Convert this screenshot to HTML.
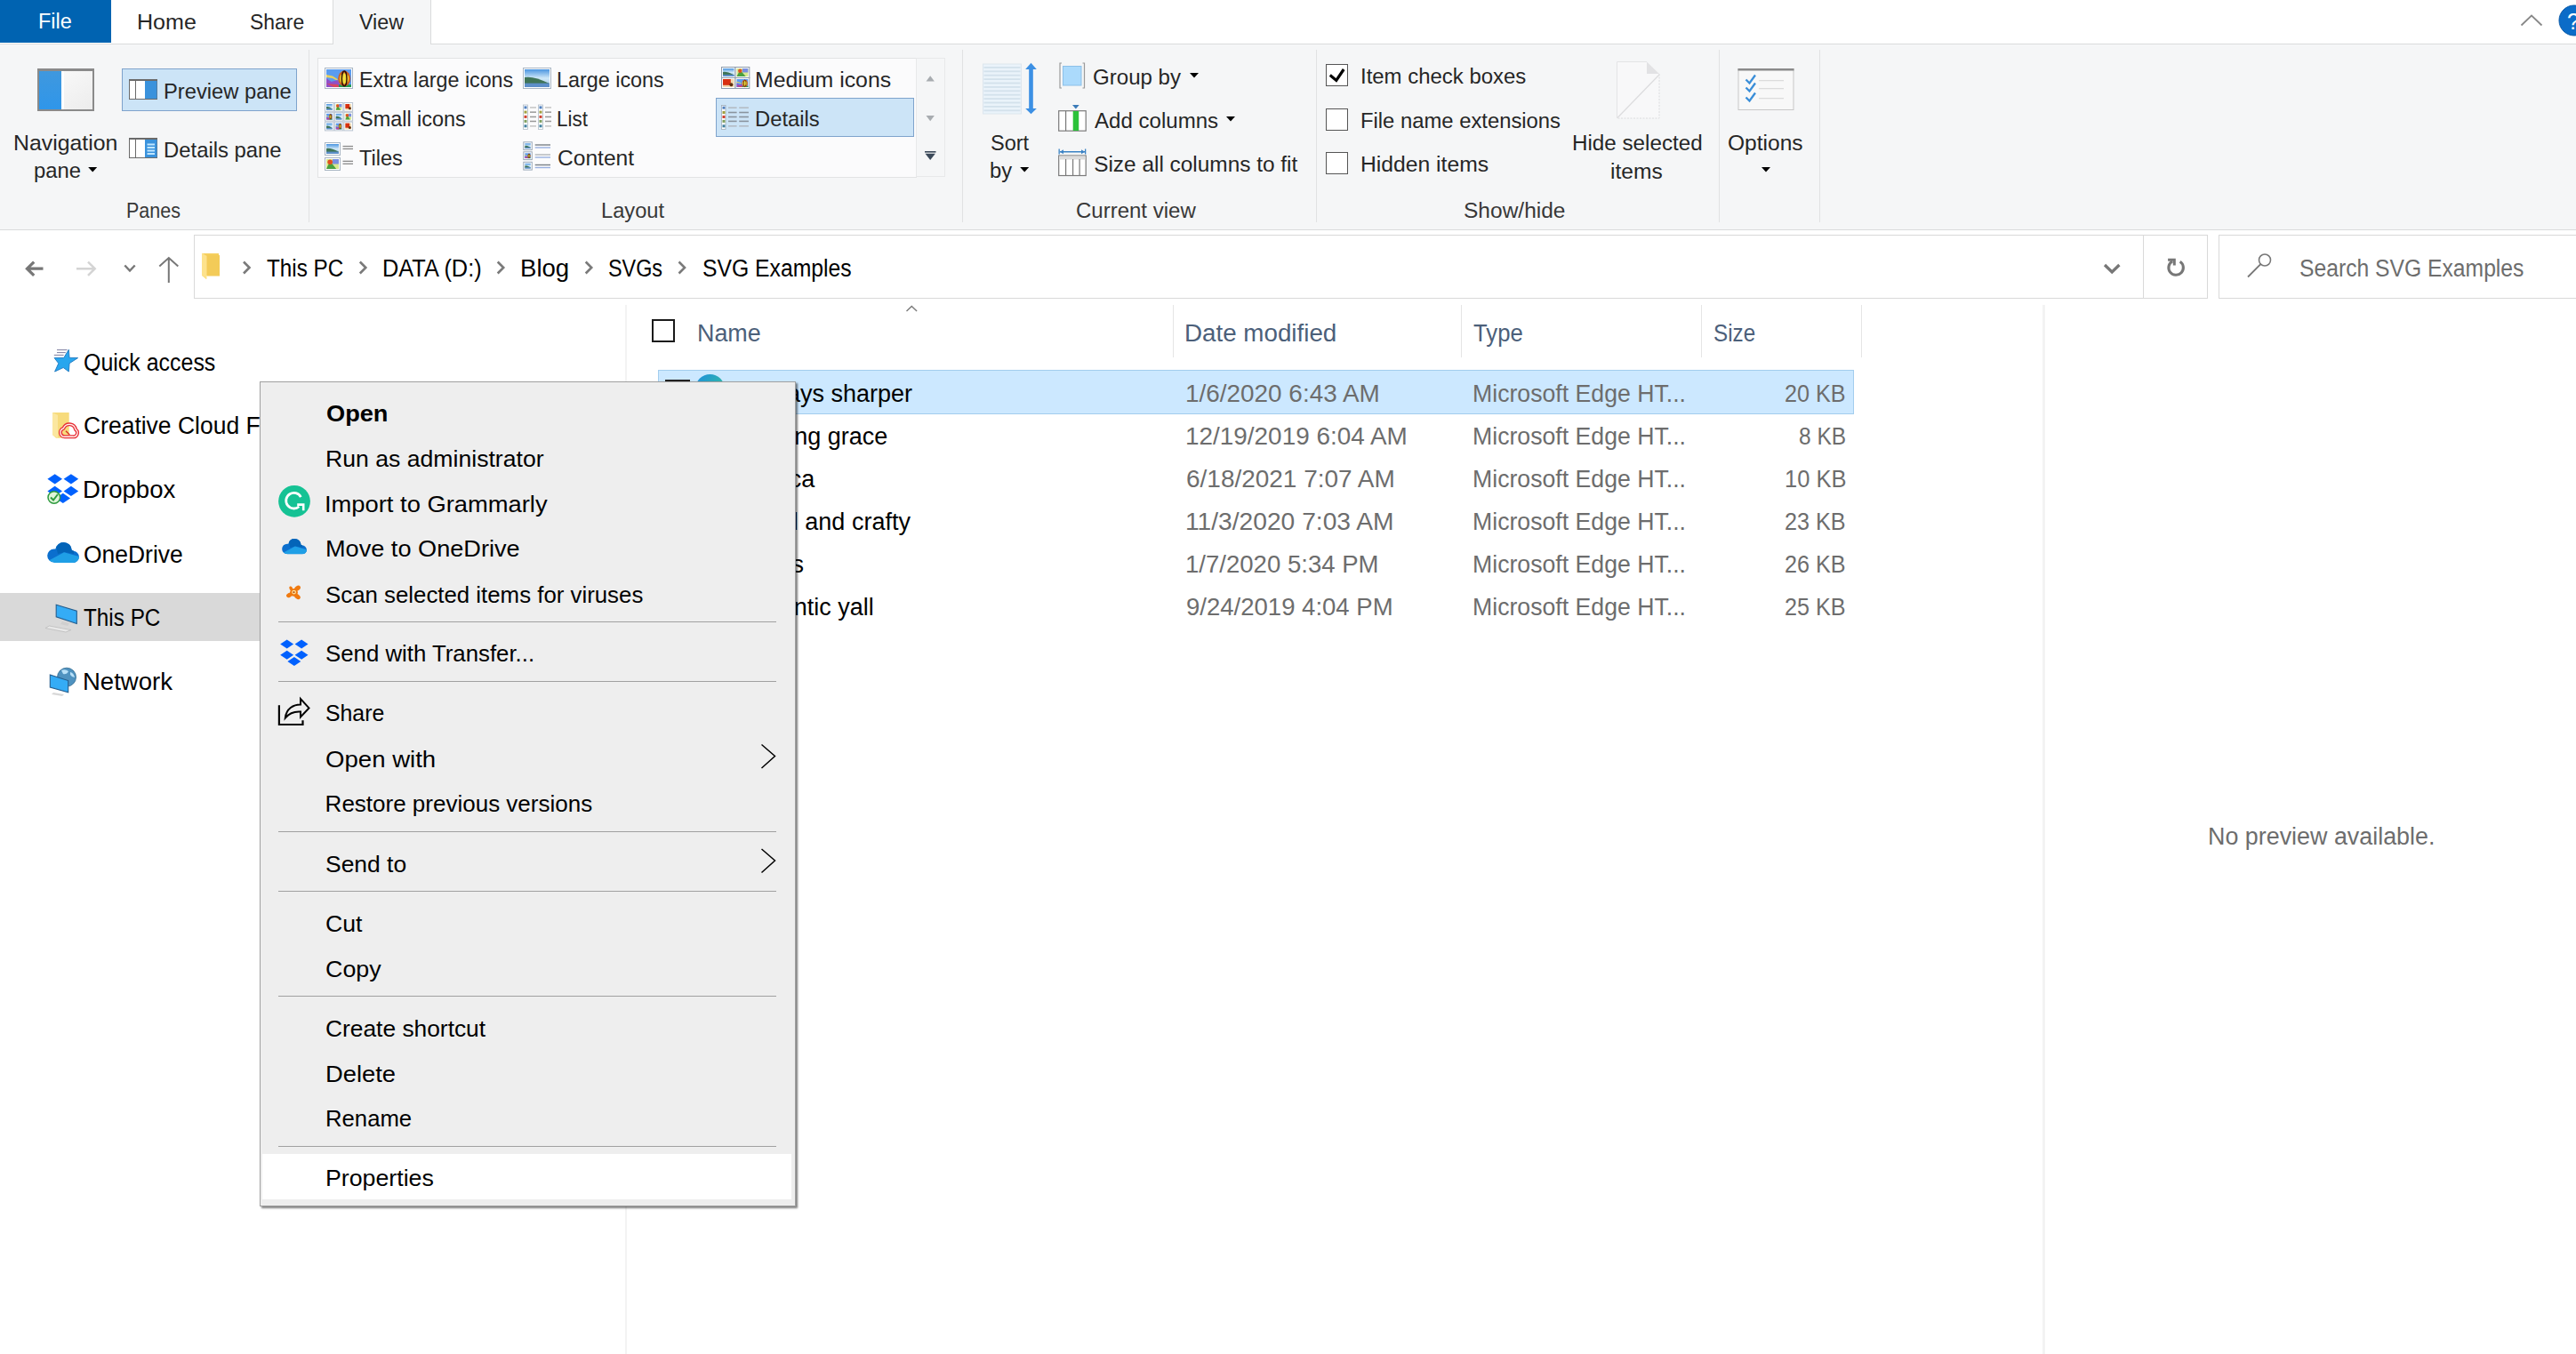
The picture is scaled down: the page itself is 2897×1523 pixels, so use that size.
<!DOCTYPE html>
<html><head><meta charset="utf-8"><style>
html,body{margin:0;padding:0;width:2897px;height:1523px;overflow:hidden;background:#ffffff;}
body{position:relative;font-family:"Liberation Sans",sans-serif;}
.r{position:absolute;}
.t{position:absolute;white-space:nowrap;line-height:1;transform-origin:0 0;}
svg{position:absolute;overflow:visible;}
</style></head><body>
<div class="r" style="left:0px;top:0px;width:2897px;height:49px;background:#ffffff;"></div>
<div class="r" style="left:0px;top:0px;width:125px;height:48px;background:#0063b1;"></div>
<div class="r" style="left:0px;top:49px;width:2897px;height:1px;background:#dadbdc;"></div>
<div class="r" style="left:374px;top:0px;width:111px;height:50px;background:#f5f6f7;box-sizing:border-box;border-left:1px solid #dadbdc;border-right:1px solid #dadbdc;"></div>
<div class="t" style="left:42.72px;top:11.80px;font-size:24.4px;color:#ffffff;transform:scaleX(0.9627);">File</div>
<div class="t" style="left:153.69px;top:12.90px;font-size:24.4px;color:#262626;transform:scaleX(1.0278);">Home</div>
<div class="t" style="left:281.15px;top:12.90px;font-size:24.4px;color:#262626;transform:scaleX(0.9409);">Share</div>
<div class="t" style="left:403.77px;top:12.90px;font-size:24.4px;color:#262626;transform:scaleX(0.9556);">View</div>
<div class="r" style="left:0px;top:50px;width:2897px;height:208px;background:#f5f6f7;"></div>
<div class="r" style="left:0px;top:258px;width:2897px;height:1px;background:#dadbdc;"></div>
<div class="r" style="left:347px;top:56px;width:1px;height:194px;background:#e1e2e3;"></div>
<div class="r" style="left:1082px;top:56px;width:1px;height:194px;background:#e1e2e3;"></div>
<div class="r" style="left:1480px;top:56px;width:1px;height:194px;background:#e1e2e3;"></div>
<div class="r" style="left:1933px;top:56px;width:1px;height:194px;background:#e1e2e3;"></div>
<div class="r" style="left:2046px;top:56px;width:1px;height:194px;background:#e1e2e3;"></div>
<div class="r" style="left:137px;top:77px;width:197px;height:48px;background:#cce4f7;box-sizing:border-box;border:1px solid #7fa3cc;"></div>
<div class="t" style="left:15.41px;top:149.30px;font-size:24.4px;color:#262626;transform:scaleX(1.0183);">Navigation</div>
<div class="t" style="left:38.17px;top:180.30px;font-size:24.4px;color:#262626;transform:scaleX(0.9763);">pane</div>
<div class="t" style="left:183.90px;top:91.40px;font-size:24.4px;color:#262626;transform:scaleX(0.9724);">Preview pane</div>
<div class="t" style="left:184.49px;top:157.00px;font-size:24.4px;color:#262626;transform:scaleX(0.9782);">Details pane</div>
<div class="t" style="left:141.88px;top:224.70px;font-size:24.4px;color:#383838;transform:scaleX(0.8814);">Panes</div>
<div class="r" style="left:357px;top:65px;width:674px;height:135px;background:#fbfbfc;box-sizing:border-box;border:1px solid #e2e3e4;"></div>
<div class="r" style="left:1030px;top:65px;width:33px;height:134px;background:#f5f6f7;box-sizing:border-box;border:1px solid #e8e9ea;"></div>
<div class="r" style="left:805px;top:110px;width:223px;height:44px;background:#cce4f7;box-sizing:border-box;border:1px solid #7fa3cc;"></div>
<div class="t" style="left:403.54px;top:77.70px;font-size:24.4px;color:#262626;transform:scaleX(0.9533);">Extra large icons</div>
<div class="t" style="left:626.13px;top:77.70px;font-size:24.4px;color:#262626;transform:scaleX(0.9576);">Large icons</div>
<div class="t" style="left:849.11px;top:78.10px;font-size:24.4px;color:#262626;transform:scaleX(1.0175);">Medium icons</div>
<div class="t" style="left:403.83px;top:122.00px;font-size:24.4px;color:#262626;transform:scaleX(0.9609);">Small icons</div>
<div class="t" style="left:626.20px;top:122.00px;font-size:24.4px;color:#262626;transform:scaleX(0.9200);">List</div>
<div class="t" style="left:849.20px;top:122.00px;font-size:24.4px;color:#262626;transform:scaleX(0.9744);">Details</div>
<div class="t" style="left:403.83px;top:165.90px;font-size:24.4px;color:#262626;transform:scaleX(0.9665);">Tiles</div>
<div class="t" style="left:626.77px;top:165.90px;font-size:24.4px;color:#262626;transform:scaleX(1.0079);">Content</div>
<div class="t" style="left:675.81px;top:224.80px;font-size:24.4px;color:#383838;transform:scaleX(0.9704);">Layout</div>
<div class="t" style="left:1113.82px;top:149.10px;font-size:24.4px;color:#262626;transform:scaleX(0.9647);">Sort</div>
<div class="t" style="left:1113.08px;top:180.20px;font-size:24.4px;color:#262626;transform:scaleX(0.9713);">by</div>
<div class="t" style="left:1229.40px;top:75.10px;font-size:24.4px;color:#262626;transform:scaleX(0.9872);">Group by</div>
<div class="t" style="left:1231.40px;top:124.30px;font-size:24.4px;color:#262626;transform:scaleX(0.9867);">Add columns</div>
<div class="t" style="left:1230.18px;top:172.90px;font-size:24.4px;color:#262626;">Size all columns to fit</div>
<div class="t" style="left:1210.00px;top:225.20px;font-size:24.4px;color:#383838;transform:scaleX(0.9840);">Current view</div>
<div class="r" style="left:1491px;top:72px;width:25px;height:25px;background:#ffffff;box-sizing:border-box;border:1px solid #555555;"></div>
<div class="r" style="left:1491px;top:122px;width:25px;height:25px;background:#ffffff;box-sizing:border-box;border:1px solid #555555;"></div>
<div class="r" style="left:1491px;top:171px;width:25px;height:25px;background:#ffffff;box-sizing:border-box;border:1px solid #555555;"></div>
<div class="t" style="left:1529.94px;top:73.80px;font-size:24.4px;color:#262626;transform:scaleX(0.9815);">Item check boxes</div>
<div class="t" style="left:1530.19px;top:124.00px;font-size:24.4px;color:#262626;transform:scaleX(0.9761);">File name extensions</div>
<div class="t" style="left:1530.12px;top:172.70px;font-size:24.4px;color:#262626;transform:scaleX(1.0124);">Hidden items</div>
<div class="t" style="left:1645.77px;top:224.80px;font-size:24.4px;color:#383838;transform:scaleX(1.0053);">Show/hide</div>
<div class="t" style="left:1767.86px;top:148.50px;font-size:24.4px;color:#262626;transform:scaleX(0.9923);">Hide selected</div>
<div class="t" style="left:1811.28px;top:180.60px;font-size:24.4px;color:#262626;transform:scaleX(1.0066);">items</div>
<div class="t" style="left:1943.47px;top:148.50px;font-size:24.4px;color:#262626;transform:scaleX(1.0063);">Options</div>
<div class="r" style="left:218px;top:264px;width:2265px;height:72px;background:#ffffff;box-sizing:border-box;border:1px solid #d9d9d9;"></div>
<div class="r" style="left:2410px;top:264px;width:1px;height:72px;background:#d9d9d9;"></div>
<div class="r" style="left:2495px;top:264px;width:420px;height:72px;background:#ffffff;box-sizing:border-box;border:1px solid #d9d9d9;"></div>
<div class="t" style="left:300.02px;top:289.00px;font-size:27px;color:#000000;transform:scaleX(0.8978);">This PC</div>
<div class="t" style="left:430.37px;top:288.80px;font-size:27px;color:#000000;transform:scaleX(0.9381);">DATA (D:)</div>
<div class="t" style="left:585.09px;top:288.80px;font-size:27px;color:#000000;transform:scaleX(1.0215);">Blog</div>
<div class="t" style="left:684.43px;top:288.80px;font-size:27px;color:#000000;transform:scaleX(0.8657);">SVGs</div>
<div class="t" style="left:789.86px;top:288.80px;font-size:27px;color:#000000;transform:scaleX(0.9157);">SVG Examples</div>
<div class="t" style="left:2585.77px;top:288.80px;font-size:27px;color:#6d6d6d;transform:scaleX(0.9142);">Search SVG Examples</div>
<div class="r" style="left:703px;top:343px;width:2px;height:1180px;background:#f3f3f3;"></div>
<div class="r" style="left:2297px;top:343px;width:3px;height:1180px;background:#f3f3f3;"></div>
<div class="r" style="left:1319px;top:343px;width:1px;height:59px;background:#e5e5e5;"></div>
<div class="r" style="left:1643px;top:343px;width:1px;height:59px;background:#e5e5e5;"></div>
<div class="r" style="left:1913px;top:343px;width:1px;height:59px;background:#e5e5e5;"></div>
<div class="r" style="left:2093px;top:343px;width:1px;height:59px;background:#e5e5e5;"></div>
<div class="r" style="left:733px;top:359px;width:26px;height:26px;box-sizing:border-box;border:2px solid #1a1a1a;"></div>
<div class="t" style="left:784.45px;top:361.90px;font-size:27px;color:#4c607a;transform:scaleX(0.9959);">Name</div>
<div class="t" style="left:1332.28px;top:361.90px;font-size:27px;color:#4c607a;transform:scaleX(1.0281);">Date modified</div>
<div class="t" style="left:1657.19px;top:361.80px;font-size:27px;color:#4c607a;transform:scaleX(0.9524);">Type</div>
<div class="t" style="left:1927.19px;top:361.80px;font-size:27px;color:#4c607a;transform:scaleX(0.8969);">Size</div>
<div class="r" style="left:740px;top:416px;width:1345px;height:50px;background:#cce8ff;box-sizing:border-box;border:1px solid #a3cdee;"></div>
<div class="t" style="left:841.46px;top:429.50px;font-size:27px;color:#000000;">Always sharper</div>
<div class="t" style="left:1332.67px;top:429.50px;font-size:27px;color:#6d6d6d;transform:scaleX(1.0335);">1/6/2020 6:43 AM</div>
<div class="t" style="left:1655.57px;top:429.50px;font-size:27px;color:#6d6d6d;transform:scaleX(0.9874);">Microsoft Edge HT...</div>
<div class="t" style="left:2007.44px;top:429.50px;font-size:27px;color:#6d6d6d;transform:scaleX(0.9337);">20 KB</div>
<div class="t" style="left:818.16px;top:477.50px;font-size:27px;color:#000000;">Amazing grace</div>
<div class="t" style="left:1332.67px;top:477.50px;font-size:27px;color:#6d6d6d;transform:scaleX(1.0336);">12/19/2019 6:04 AM</div>
<div class="t" style="left:1655.57px;top:477.50px;font-size:27px;color:#6d6d6d;transform:scaleX(0.9874);">Microsoft Edge HT...</div>
<div class="t" style="left:2023.02px;top:477.50px;font-size:27px;color:#6d6d6d;transform:scaleX(0.9081);">8 KB</div>
<div class="t" style="left:854.74px;top:525.50px;font-size:27px;color:#000000;">Anca</div>
<div class="t" style="left:1333.50px;top:525.50px;font-size:27px;color:#6d6d6d;transform:scaleX(1.0358);">6/18/2021 7:07 AM</div>
<div class="t" style="left:1655.57px;top:525.50px;font-size:27px;color:#6d6d6d;transform:scaleX(0.9874);">Microsoft Edge HT...</div>
<div class="t" style="left:2006.66px;top:525.50px;font-size:27px;color:#6d6d6d;transform:scaleX(0.9444);">10 KB</div>
<div class="t" style="left:843.81px;top:573.50px;font-size:27px;color:#000000;">Bold and crafty</div>
<div class="t" style="left:1332.65px;top:573.50px;font-size:27px;color:#6d6d6d;transform:scaleX(1.0439);">11/3/2020 7:03 AM</div>
<div class="t" style="left:1655.57px;top:573.50px;font-size:27px;color:#6d6d6d;transform:scaleX(0.9874);">Microsoft Edge HT...</div>
<div class="t" style="left:2007.44px;top:573.50px;font-size:27px;color:#6d6d6d;transform:scaleX(0.9337);">23 KB</div>
<div class="t" style="left:842.52px;top:621.50px;font-size:27px;color:#000000;">Bees</div>
<div class="t" style="left:1332.70px;top:621.50px;font-size:27px;color:#6d6d6d;transform:scaleX(1.0206);">1/7/2020 5:34 PM</div>
<div class="t" style="left:1655.57px;top:621.50px;font-size:27px;color:#6d6d6d;transform:scaleX(0.9874);">Microsoft Edge HT...</div>
<div class="t" style="left:2007.44px;top:621.50px;font-size:27px;color:#6d6d6d;transform:scaleX(0.9337);">26 KB</div>
<div class="t" style="left:822.27px;top:669.50px;font-size:27px;color:#000000;">Authentic yall</div>
<div class="t" style="left:1333.52px;top:669.50px;font-size:27px;color:#6d6d6d;transform:scaleX(1.0194);">9/24/2019 4:04 PM</div>
<div class="t" style="left:1655.57px;top:669.50px;font-size:27px;color:#6d6d6d;transform:scaleX(0.9874);">Microsoft Edge HT...</div>
<div class="t" style="left:2007.44px;top:669.50px;font-size:27px;color:#6d6d6d;transform:scaleX(0.9337);">25 KB</div>
<div class="t" style="left:2482.85px;top:927.60px;font-size:27px;color:#6d6d6d;transform:scaleX(0.9953);">No preview available.</div>
<div class="r" style="left:0px;top:667px;width:703px;height:54px;background:#d9d9d9;"></div>
<div class="t" style="left:93.95px;top:394.60px;font-size:27px;color:#000000;transform:scaleX(0.9240);">Quick access</div>
<div class="t" style="left:93.88px;top:466.30px;font-size:27px;color:#000000;transform:scaleX(0.9806);">Creative Cloud Files</div>
<div class="t" style="left:93.29px;top:538.30px;font-size:27px;color:#000000;transform:scaleX(1.0228);">Dropbox</div>
<div class="t" style="left:93.78px;top:610.70px;font-size:27px;color:#000000;transform:scaleX(0.9793);">OneDrive</div>
<div class="t" style="left:94.21px;top:682.00px;font-size:27px;color:#000000;transform:scaleX(0.8999);">This PC</div>
<div class="t" style="left:93.30px;top:754.40px;font-size:27px;color:#000000;transform:scaleX(1.0193);">Network</div>
<svg style="left:0;top:0" width="2897" height="1523" viewBox="0 0 2897 1523"><polyline points="2835.5,28.5 2847,17.5 2858.5,28.5" fill="none" stroke="#888" stroke-width="1.8"/><circle cx="2895" cy="23" r="17" fill="#0b6cc8" stroke="#0a5aa8" stroke-width="1"/><text x="2887" y="32.5" font-family="Liberation Sans" font-size="25" fill="#ffffff">?</text><defs><linearGradient id="gnavr" x1="0" y1="0" x2="1" y2="1"><stop offset="0" stop-color="#fcfcfc"/><stop offset="1" stop-color="#ececec"/></linearGradient><linearGradient id="gnavb" x1="0" y1="0" x2="0" y2="1"><stop offset="0" stop-color="#3f98de"/><stop offset="1" stop-color="#2f96ea"/></linearGradient></defs><rect x="43" y="78" width="62" height="46" fill="url(#gnavr)" stroke="#8a8a8a" stroke-width="2"/><rect x="44" y="80" width="25" height="43" fill="url(#gnavb)"/><rect x="42" y="77" width="64" height="3" fill="#8a8a8a"/><rect x="69" y="80" width="3" height="43" fill="#ffffff"/><rect x="145.5" y="89.5" width="31" height="22" fill="#ffffff" stroke="#6a6a6a" stroke-width="1"/><rect x="145" y="89" width="32" height="2" fill="#6a6a6a"/><rect x="152" y="90" width="1" height="21" fill="#6a6a6a"/><rect x="163" y="91" width="13.5" height="20" fill="#3a92dc"/><rect x="145.5" y="155.5" width="31" height="22" fill="#ffffff" stroke="#6a6a6a" stroke-width="1"/><rect x="145" y="155" width="32" height="2" fill="#6a6a6a"/><rect x="152" y="156" width="1" height="21" fill="#6a6a6a"/><rect x="163" y="157" width="13.5" height="20" fill="#3a92dc"/><rect x="165.5" y="161.5" width="8.5" height="2" fill="#bfe6ff"/><rect x="165.5" y="165" width="8.5" height="2" fill="#bfe6ff"/><rect x="165.5" y="168.5" width="8.5" height="2" fill="#bfe6ff"/><rect x="165.5" y="172" width="8.5" height="2" fill="#bfe6ff"/><polygon points="99.2,188.0 109.2,188.0 104.2,193.5" fill="#000"/><polygon points="1147.2,188.0 1157.2,188.0 1152.2,193.5" fill="#000"/><polygon points="1338.0,82.0 1348.0,82.0 1343.0,87.5" fill="#000"/><polygon points="1379.0,131.0 1389.0,131.0 1384.0,136.5" fill="#000"/><polygon points="1981.0,188.0 1991.0,188.0 1986.0,193.5" fill="#000"/><defs><linearGradient id="gsky" x1="0" y1="0" x2="0" y2="1"><stop offset="0" stop-color="#4b95e0"/><stop offset="0.5" stop-color="#cfe8f8"/><stop offset="1" stop-color="#9cc4e8"/></linearGradient><linearGradient id="gedge" x1="0" y1="0" x2="1" y2="1"><stop offset="0" stop-color="#1e8de0"/><stop offset="1" stop-color="#3ad08a"/></linearGradient></defs><rect x="365.5" y="76.5" width="31.0" height="23.0" fill="#ffffff" stroke="#a9b6c4" stroke-width="1"/><rect x="367.0" y="78.0" width="28.0" height="20.0" fill="#5a9cf0"/><polygon points="367.00,84.00 374.00,85.60 379.60,89.00 379.60,91.00 374.00,88.00 367.00,87.00" fill="#e8d060"/><polygon points="367.00,88.00 372.60,92.00 379.60,90.00 383.80,98.00 367.00,98.00 367.00,88.00 367.00,88.00" fill="#9050c8"/><polygon points="367.00,94.00 375.40,98.00 382.40,98.00 379.60,95.00" fill="#d84860"/><rect x="381.0" y="95.2" width="14.0" height="2.8" fill="#1f9a50"/><ellipse cx="387.2" cy="88.4" rx="7.0" ry="8.8" fill="#d06020"/><ellipse cx="387.2" cy="88.4" rx="5.2" ry="6.2" fill="#f0d030"/><ellipse cx="387.2" cy="88.4" rx="2.8" ry="8.4" fill="none" stroke="#301008" stroke-width="1.40"/><ellipse cx="387.2" cy="88.4" rx="1.3" ry="5.3" fill="#f0e040"/><rect x="588.5" y="76.5" width="31.0" height="23.0" fill="#ffffff" stroke="#a9b6c4" stroke-width="1"/><rect x="590.0" y="78.0" width="28.0" height="20.0" fill="url(#gsky)"/><path d="M590.0 87.0 Q599.8 85.0 618.0 94.0 L618.0 95.0 L590.0 95.0 Z" fill="#3f7458"/><rect x="590.0" y="93.6" width="28.0" height="4.4" fill="#5d8fc9"/><rect x="811.5" y="75.5" width="15.5" height="12.0" fill="#ffffff" stroke="#8e9cac" stroke-width="1"/><rect x="813.0" y="77.0" width="12.5" height="9.0" fill="url(#gsky)"/><path d="M813.0 81.0 Q817.4 80.2 825.5 84.2 L825.5 84.7 L813.0 84.7 Z" fill="#3f7458"/><rect x="813.0" y="84.0" width="12.5" height="2.0" fill="#5d8fc9"/><rect x="827.0" y="75.5" width="15.8" height="12.0" fill="#ffffff" stroke="#8e9cac" stroke-width="1"/><rect x="828.5" y="77.0" width="12.8" height="9.0" fill="#d8e890"/><rect x="834.9" y="77.0" width="6.4" height="4.5" fill="#7a8ee0"/><path d="M828.5 86.0 L832.3 78.8 L838.7 86.0 Z" fill="#4aa040"/><circle cx="832.3" cy="79.7" r="2.2" fill="#e05020"/><rect x="811.5" y="87.5" width="15.5" height="12.0" fill="#ffffff" stroke="#8e9cac" stroke-width="1"/><rect x="813.0" y="89.0" width="12.5" height="9.0" fill="#f0d8b0"/><rect x="813.0" y="89.0" width="8.8" height="6.8" fill="#d83010"/><circle cx="822.4" cy="95.3" r="2.0" fill="#603010"/><rect x="827.0" y="87.5" width="15.8" height="12.0" fill="#ffffff" stroke="#8e9cac" stroke-width="1"/><rect x="828.5" y="89.0" width="12.8" height="9.0" fill="#5a9cf0"/><polygon points="828.50,91.70 831.70,92.42 834.26,93.95 834.26,94.85 831.70,93.50 828.50,93.05" fill="#e8d060"/><polygon points="828.50,93.50 831.06,95.30 834.26,94.40 836.18,98.00 828.50,98.00 828.50,93.50 828.50,93.50" fill="#9050c8"/><polygon points="828.50,96.20 832.34,98.00 835.54,98.00 834.26,96.65" fill="#d84860"/><rect x="834.9" y="96.7" width="6.4" height="1.3" fill="#1f9a50"/><ellipse cx="837.7" cy="93.7" rx="3.2" ry="4.0" fill="#d06020"/><ellipse cx="837.7" cy="93.7" rx="2.4" ry="2.8" fill="#f0d030"/><ellipse cx="837.7" cy="93.7" rx="1.3" ry="3.8" fill="none" stroke="#301008" stroke-width="0.64"/><ellipse cx="837.7" cy="93.7" rx="0.6" ry="2.4" fill="#f0e040"/><rect x="365.5" y="115.5" width="9.7" height="9.8" fill="#ffffff" stroke="#b8c4d0" stroke-width="1"/><rect x="367.0" y="117.0" width="6.7" height="6.8" fill="url(#gsky)"/><path d="M367.0 120.1 Q369.3 119.4 373.7 122.4 L373.7 122.8 L367.0 122.8 Z" fill="#3f7458"/><rect x="367.0" y="122.3" width="6.7" height="1.5" fill="#5d8fc9"/><rect x="376.2" y="115.5" width="9.7" height="9.8" fill="#ffffff" stroke="#b8c4d0" stroke-width="1"/><rect x="377.7" y="117.0" width="6.7" height="6.8" fill="#d8e890"/><rect x="381.1" y="117.0" width="3.3" height="3.4" fill="#7a8ee0"/><path d="M377.7 123.8 L379.7 118.4 L383.1 123.8 Z" fill="#4aa040"/><circle cx="379.7" cy="119.0" r="1.7" fill="#e05020"/><rect x="386.9" y="115.5" width="9.7" height="9.8" fill="#ffffff" stroke="#b8c4d0" stroke-width="1"/><rect x="388.4" y="117.0" width="6.7" height="6.8" fill="#f0d8b0"/><rect x="388.4" y="117.0" width="4.7" height="5.1" fill="#d83010"/><circle cx="393.4" cy="121.8" r="1.5" fill="#603010"/><rect x="365.5" y="126.3" width="9.7" height="9.8" fill="#ffffff" stroke="#b8c4d0" stroke-width="1"/><rect x="367.0" y="127.8" width="6.7" height="6.8" fill="#5a9cf0"/><polygon points="367.00,129.84 368.68,130.38 370.01,131.54 370.01,132.22 368.68,131.20 367.00,130.86" fill="#e8d060"/><polygon points="367.00,131.20 368.34,132.56 370.01,131.88 371.02,134.60 367.00,134.60 367.00,131.20 367.00,131.20" fill="#9050c8"/><polygon points="367.00,133.24 369.01,134.60 370.69,134.60 370.01,133.58" fill="#d84860"/><rect x="370.4" y="133.6" width="3.3" height="1.0" fill="#1f9a50"/><ellipse cx="371.8" cy="131.3" rx="1.7" ry="3.0" fill="#d06020"/><ellipse cx="371.8" cy="131.3" rx="1.3" ry="2.1" fill="#f0d030"/><ellipse cx="371.8" cy="131.3" rx="0.7" ry="2.8" fill="none" stroke="#301008" stroke-width="0.60"/><ellipse cx="371.8" cy="131.3" rx="0.3" ry="1.8" fill="#f0e040"/><rect x="376.2" y="126.3" width="9.7" height="9.8" fill="#ffffff" stroke="#b8c4d0" stroke-width="1"/><rect x="377.7" y="127.8" width="6.7" height="6.8" fill="url(#gsky)"/><path d="M377.7 130.9 Q380.0 130.2 384.4 133.2 L384.4 133.6 L377.7 133.6 Z" fill="#3f7458"/><rect x="377.7" y="133.1" width="6.7" height="1.5" fill="#5d8fc9"/><rect x="386.9" y="126.3" width="9.7" height="9.8" fill="#ffffff" stroke="#b8c4d0" stroke-width="1"/><rect x="388.4" y="127.8" width="6.7" height="6.8" fill="#d8e890"/><rect x="391.8" y="127.8" width="3.3" height="3.4" fill="#7a8ee0"/><path d="M388.4 134.6 L390.4 129.2 L393.8 134.6 Z" fill="#4aa040"/><circle cx="390.4" cy="129.8" r="1.7" fill="#e05020"/><rect x="365.5" y="137.1" width="9.7" height="9.8" fill="#ffffff" stroke="#b8c4d0" stroke-width="1"/><rect x="367.0" y="138.6" width="6.7" height="6.8" fill="url(#gsky)"/><path d="M367.0 141.7 Q369.3 141.0 373.7 144.0 L373.7 144.4 L367.0 144.4 Z" fill="#3f7458"/><rect x="367.0" y="143.9" width="6.7" height="1.5" fill="#5d8fc9"/><rect x="376.2" y="137.1" width="9.7" height="9.8" fill="#ffffff" stroke="#b8c4d0" stroke-width="1"/><rect x="377.7" y="138.6" width="6.7" height="6.8" fill="#5a9cf0"/><polygon points="377.70,140.64 379.38,141.18 380.71,142.34 380.71,143.02 379.38,142.00 377.70,141.66" fill="#e8d060"/><polygon points="377.70,142.00 379.04,143.36 380.71,142.68 381.72,145.40 377.70,145.40 377.70,142.00 377.70,142.00" fill="#9050c8"/><polygon points="377.70,144.04 379.71,145.40 381.38,145.40 380.71,144.38" fill="#d84860"/><rect x="381.1" y="144.4" width="3.3" height="1.0" fill="#1f9a50"/><ellipse cx="382.5" cy="142.1" rx="1.7" ry="3.0" fill="#d06020"/><ellipse cx="382.5" cy="142.1" rx="1.3" ry="2.1" fill="#f0d030"/><ellipse cx="382.5" cy="142.1" rx="0.7" ry="2.8" fill="none" stroke="#301008" stroke-width="0.60"/><ellipse cx="382.5" cy="142.1" rx="0.3" ry="1.8" fill="#f0e040"/><rect x="386.9" y="137.1" width="9.7" height="9.8" fill="#ffffff" stroke="#b8c4d0" stroke-width="1"/><rect x="388.4" y="138.6" width="6.7" height="6.8" fill="#f0d8b0"/><rect x="388.4" y="138.6" width="4.7" height="5.1" fill="#d83010"/><circle cx="393.4" cy="143.4" r="1.5" fill="#603010"/><rect x="588.5" y="118" width="5" height="27.5" fill="#ffffff" stroke="#b0bcc8" stroke-width="0.8"/><rect x="589.5" y="119.4" width="3" height="3" fill="#5080c0"/><rect x="596.0" y="120.2" width="7" height="1.5" fill="#c4c4c4"/><rect x="589.5" y="124.6" width="3" height="3" fill="#a0a040"/><rect x="596.0" y="125.4" width="7" height="1.5" fill="#9a9a9a"/><rect x="589.5" y="129.9" width="3" height="3" fill="#d04030"/><rect x="596.0" y="130.7" width="7" height="1.5" fill="#9a9a9a"/><rect x="589.5" y="134.9" width="3" height="3" fill="#80a060"/><rect x="596.0" y="135.7" width="7" height="1.5" fill="#9a9a9a"/><rect x="589.5" y="140.3" width="3" height="3" fill="#4080a0"/><rect x="596.0" y="141.1" width="7" height="1.5" fill="#c4c4c4"/><rect x="605.5" y="118" width="5" height="27.5" fill="#ffffff" stroke="#b0bcc8" stroke-width="0.8"/><rect x="606.5" y="119.4" width="3" height="3" fill="#5080c0"/><rect x="613.0" y="120.2" width="7" height="1.5" fill="#c4c4c4"/><rect x="606.5" y="124.6" width="3" height="3" fill="#a0a040"/><rect x="613.0" y="125.4" width="7" height="1.5" fill="#9a9a9a"/><rect x="606.5" y="129.9" width="3" height="3" fill="#d04030"/><rect x="613.0" y="130.7" width="7" height="1.5" fill="#9a9a9a"/><rect x="606.5" y="134.9" width="3" height="3" fill="#80a060"/><rect x="613.0" y="135.7" width="7" height="1.5" fill="#9a9a9a"/><rect x="606.5" y="140.3" width="3" height="3" fill="#4080a0"/><rect x="613.0" y="141.1" width="7" height="1.5" fill="#c4c4c4"/><rect x="811.5" y="118.5" width="4.5" height="27" fill="#ffffff" stroke="#a0acb8" stroke-width="0.8"/><rect x="812.5" y="119.7" width="3" height="3" fill="#5080c0"/><rect x="819" y="120.4" width="9.6" height="1.6" fill="#b4bcc4"/><rect x="831.2" y="120.4" width="10.7" height="1.6" fill="#b4bcc4"/><rect x="812.5" y="125.0" width="3" height="3" fill="#a0a040"/><rect x="819" y="125.7" width="9.6" height="1.6" fill="#8a949e"/><rect x="831.2" y="125.7" width="10.7" height="1.6" fill="#8a949e"/><rect x="812.5" y="130.0" width="3" height="3" fill="#d04030"/><rect x="819" y="130.7" width="9.6" height="1.6" fill="#8a949e"/><rect x="831.2" y="130.7" width="10.7" height="1.6" fill="#8a949e"/><rect x="812.5" y="134.9" width="3" height="3" fill="#80a060"/><rect x="819" y="135.6" width="9.6" height="1.6" fill="#8a949e"/><rect x="831.2" y="135.6" width="10.7" height="1.6" fill="#8a949e"/><rect x="812.5" y="140.3" width="3" height="3" fill="#4080a0"/><rect x="819" y="141.0" width="9.6" height="1.6" fill="#b4bcc4"/><rect x="831.2" y="141.0" width="10.7" height="1.6" fill="#b4bcc4"/><rect x="365.5" y="160.5" width="17.0" height="14.0" fill="#ffffff" stroke="#a9b6c4" stroke-width="1"/><rect x="367.0" y="162.0" width="14.0" height="11.0" fill="url(#gsky)"/><path d="M367.0 166.9 Q371.9 165.8 381.0 170.8 L381.0 171.3 L367.0 171.3 Z" fill="#3f7458"/><rect x="367.0" y="170.6" width="14.0" height="2.4" fill="#5d8fc9"/><rect x="365.5" y="177.5" width="17.0" height="14.0" fill="#ffffff" stroke="#a9b6c4" stroke-width="1"/><rect x="367.0" y="179.0" width="14.0" height="11.0" fill="#d8e890"/><rect x="374.0" y="179.0" width="7.0" height="5.5" fill="#7a8ee0"/><path d="M367.0 190.0 L371.2 181.2 L378.2 190.0 Z" fill="#4aa040"/><circle cx="371.2" cy="182.3" r="2.8" fill="#e05020"/><rect x="385.5" y="163.9" width="11.5" height="1.3" fill="#8a8a8a"/><rect x="385.5" y="166.8" width="11.5" height="1.3" fill="#8a8a8a"/><rect x="385.5" y="180.7" width="11.5" height="1.3" fill="#8a8a8a"/><rect x="385.5" y="183.6" width="11.5" height="1.3" fill="#8a8a8a"/><rect x="588.8" y="159.8" width="9.5" height="8.8" fill="#ffffff" stroke="#9aa8b8" stroke-width="1"/><rect x="590.3" y="161.3" width="6.5" height="5.8" fill="url(#gsky)"/><path d="M590.3 163.9 Q592.6 163.3 596.8 165.9 L596.8 166.2 L590.3 166.2 Z" fill="#3f7458"/><rect x="590.3" y="165.8" width="6.5" height="1.3" fill="#5d8fc9"/><rect x="601.7" y="162.3" width="17.3" height="1.4" fill="#7a8088"/><rect x="601.7" y="165.3" width="17.3" height="1.4" fill="#98b0e0"/><rect x="588.8" y="170.8" width="9.5" height="8.8" fill="#ffffff" stroke="#9aa8b8" stroke-width="1"/><rect x="590.3" y="172.3" width="6.5" height="5.8" fill="#5a9cf0"/><polygon points="590.30,174.04 591.92,174.50 593.22,175.49 593.22,176.07 591.92,175.20 590.30,174.91" fill="#e8d060"/><polygon points="590.30,175.20 591.60,176.36 593.22,175.78 594.20,178.10 590.30,178.10 590.30,175.20 590.30,175.20" fill="#9050c8"/><polygon points="590.30,176.94 592.25,178.10 593.88,178.10 593.22,177.23" fill="#d84860"/><rect x="593.5" y="177.3" width="3.2" height="0.8" fill="#1f9a50"/><ellipse cx="595.0" cy="175.3" rx="1.6" ry="2.6" fill="#d06020"/><ellipse cx="595.0" cy="175.3" rx="1.2" ry="1.8" fill="#f0d030"/><ellipse cx="595.0" cy="175.3" rx="0.7" ry="2.4" fill="none" stroke="#301008" stroke-width="0.60"/><ellipse cx="595.0" cy="175.3" rx="0.3" ry="1.5" fill="#f0e040"/><rect x="601.7" y="173.3" width="17.3" height="1.4" fill="#b0b4b8"/><rect x="601.7" y="176.3" width="17.3" height="1.4" fill="#98b0e0"/><rect x="588.8" y="182.3" width="9.5" height="8.8" fill="#ffffff" stroke="#9aa8b8" stroke-width="1"/><rect x="590.3" y="183.8" width="6.5" height="5.8" fill="url(#gsky)"/><path d="M590.3 186.4 Q592.6 185.8 596.8 188.4 L596.8 188.7 L590.3 188.7 Z" fill="#3f7458"/><rect x="590.3" y="188.3" width="6.5" height="1.3" fill="#5d8fc9"/><rect x="601.7" y="184.8" width="17.3" height="1.4" fill="#7a8088"/><rect x="601.7" y="187.8" width="17.3" height="1.4" fill="#98b0e0"/><polygon points="1041.5,91.6 1046.2,85.3 1050.9,91.6" fill="#a8acb0"/><polygon points="1041.5,130 1046.2,136.3 1050.9,130" fill="#a8acb0"/><rect x="1040" y="170" width="12.5" height="1.6" fill="#3c4a5a"/><polygon points="1040.5,172.8 1046.2,180 1051.9,172.8" fill="#3c4a5a"/><rect x="1105.5" y="72" width="43" height="56" fill="#eaf3fa" stroke="#dde6ee" stroke-width="1"/><rect x="1106.5" y="75.0" width="41" height="1.8" fill="#d3e1ec"/><rect x="1106.5" y="79.4" width="41" height="1.8" fill="#d3e1ec"/><rect x="1106.5" y="83.8" width="41" height="1.8" fill="#d3e1ec"/><rect x="1106.5" y="88.2" width="41" height="1.8" fill="#d3e1ec"/><rect x="1106.5" y="92.6" width="41" height="1.8" fill="#d3e1ec"/><rect x="1106.5" y="97.0" width="41" height="1.8" fill="#d3e1ec"/><rect x="1106.5" y="101.4" width="41" height="1.8" fill="#d3e1ec"/><rect x="1106.5" y="105.8" width="41" height="1.8" fill="#d3e1ec"/><rect x="1106.5" y="110.2" width="41" height="1.8" fill="#d3e1ec"/><rect x="1106.5" y="114.6" width="41" height="1.8" fill="#d3e1ec"/><rect x="1106.5" y="119.0" width="41" height="1.8" fill="#d3e1ec"/><rect x="1106.5" y="123.4" width="41" height="1.8" fill="#d3e1ec"/><rect x="1157.2" y="76" width="4.6" height="48" fill="#3c90e4"/><polygon points="1153.2,78 1159.5,70.7 1165.8,78" fill="#3c90e4"/><polygon points="1153.2,122 1159.5,128.3 1165.8,122" fill="#3c90e4"/><path d="M1194 71 h-2 v28 h2 M1217.5 71 h2 v28 h-2" fill="none" stroke="#9a9a9a" stroke-width="1.2"/><rect x="1195.5" y="74.5" width="20.5" height="21.5" fill="#abdafc" stroke="#8cc0e8" stroke-width="1"/><rect x="1190.7" y="124.7" width="30.5" height="22.5" fill="#ffffff" stroke="#7a7a7a" stroke-width="1.2"/><rect x="1198" y="125" width="1.2" height="22" fill="#7a7a7a"/><rect x="1206.7" y="125" width="6.5" height="22" fill="#2cc23a"/><polygon points="1206,118 1213.7,118 1209.9,122.4" fill="#3a7ab8"/><rect x="1190.7" y="175" width="30.5" height="22.5" fill="#ffffff" stroke="#7a7a7a" stroke-width="1.2"/><rect x="1191.3" y="175.5" width="29.3" height="4" fill="#dcdcdc"/><rect x="1198.0" y="179" width="1.2" height="18" fill="#7a7a7a"/><rect x="1206.0" y="179" width="1.2" height="18" fill="#7a7a7a"/><rect x="1213.5" y="179" width="1.2" height="18" fill="#7a7a7a"/><rect x="1192" y="170" width="28" height="1.5" fill="#3a82c4"/><rect x="1190.5" y="167.5" width="1.3" height="6" fill="#3a82c4"/><rect x="1220" y="167.5" width="1.3" height="6" fill="#3a82c4"/><polygon points="1192,170.7 1196,168.2 1196,173.2" fill="#3a82c4"/><polygon points="1220,170.7 1216,168.2 1216,173.2" fill="#3a82c4"/><polyline points="1495.8,84.6 1502.8,90.4 1511.2,78" fill="none" stroke="#000" stroke-width="3.2" stroke-linejoin="miter"/><path d="M1818.5 69.5 H1852 L1866 83 V133 H1818.5 Z" fill="#f8f8f9"/><path d="M1818.5 133 V69.5 H1852" fill="none" stroke="#e4e4e6" stroke-width="1"/><path d="M1866 83 V133 H1818.5" fill="none" stroke="#dcdcde" stroke-width="1" stroke-dasharray="2,1.5"/><path d="M1852 69.5 V83 H1866 Z" fill="#e2e2e4"/><line x1="1819" y1="132.5" x2="1866" y2="84" stroke="#dcdcde" stroke-width="1.2"/><rect x="1955" y="77.5" width="62" height="46" fill="#f8f8f8" stroke="#c8c8c8" stroke-width="1"/><rect x="1954.5" y="77" width="63" height="2.5" fill="#8a8a8a"/><polyline points="1963.5,89.5 1967.5,93.5 1974,84.5" fill="none" stroke="#3a8ed8" stroke-width="2.3"/><rect x="1978" y="90.0" width="28" height="1.3" fill="#dcdcdc"/><polyline points="1963.5,98.5 1967.5,102.5 1974,93.5" fill="none" stroke="#3a8ed8" stroke-width="2.3"/><rect x="1978" y="99.0" width="28" height="1.3" fill="#dcdcdc"/><polyline points="1963.5,109.5 1967.5,113.5 1974,104.5" fill="none" stroke="#3a8ed8" stroke-width="2.3"/><rect x="1978" y="110.0" width="28" height="1.3" fill="#dcdcdc"/><path d="M48.5 302.2 H31 M38.2 294.6 L30.5 302.2 L38.2 309.8" fill="none" stroke="#777" stroke-width="3.3"/><path d="M86 302.2 H106 M99 294.6 L106.7 302.2 L99 309.8" fill="none" stroke="#d4d4d4" stroke-width="2.5"/><polyline points="140.3,298.5 146,304.5 151.7,298.5" fill="none" stroke="#777" stroke-width="2.4"/><path d="M189.8 318 V291 M179.3 299.5 L189.8 290 L200.3 299.5" fill="none" stroke="#777" stroke-width="2"/><path d="M227.5 285 H246 V310 H232 L232 314 L227.5 310 Z" fill="#f5cf5e"/><rect x="232.5" y="287" width="14.5" height="23.5" fill="#f3cb58"/><path d="M227 284.5 L232.5 288 V314 L227 310 Z" fill="#fde28c"/><polyline points="274.0,294.5 280.5,301 274.0,307.5" fill="none" stroke="#7a7a7a" stroke-width="2.6"/><polyline points="404.8,294.5 411.3,301 404.8,307.5" fill="none" stroke="#7a7a7a" stroke-width="2.6"/><polyline points="559.7,294.5 566.2,301 559.7,307.5" fill="none" stroke="#7a7a7a" stroke-width="2.6"/><polyline points="658.7,294.5 665.2,301 658.7,307.5" fill="none" stroke="#7a7a7a" stroke-width="2.6"/><polyline points="763.5,294.5 770.0,301 763.5,307.5" fill="none" stroke="#7a7a7a" stroke-width="2.6"/><polyline points="2367,298 2375.2,306 2383.4,298" fill="none" stroke="#777" stroke-width="3.3"/><path d="M2451.7 294.2 A8.25 8.25 0 1 1 2443.2 293.8" fill="none" stroke="#777" stroke-width="3.1"/><polyline points="2438.1,292.3 2445.3,292.3 2445.3,298.6" fill="none" stroke="#777" stroke-width="3" stroke-linejoin="miter"/><circle cx="2547" cy="292.5" r="6.5" fill="none" stroke="#777" stroke-width="1.6"/><line x1="2542.5" y1="297" x2="2528" y2="311.5" stroke="#777" stroke-width="1.8"/><polyline points="1019.5,350 1025.3,344.5 1031.1,350" fill="none" stroke="#7a7a7a" stroke-width="1.4"/><rect x="749" y="428" width="26" height="26" fill="#ffffff" stroke="#222" stroke-width="2"/><circle cx="798.5" cy="437.5" r="16.5" fill="url(#gedge)"/><polygon points="77.3,393.3 71.7,402.5 61.1,402.6 65.8,408.7 61.6,418 71.2,413.5 77.3,418 78.1,408.7 87.6,402.6 78.1,402.4" fill="#28a6ee" stroke="#1f78c0" stroke-width="0.9" stroke-linejoin="round"/><rect x="64" y="393" width="11.5" height="1.1" fill="#8a8aa8"/><rect x="64" y="396" width="9.8" height="1.1" fill="#8a8aa8"/><rect x="60.8" y="398.9" width="10.8" height="1.1" fill="#8a8aa8"/><path d="M59 464 H77.7 V492.8 H63 L59 489 Z" fill="#f7db7c"/><path d="M59 464 L65 467 V493 L59 489 Z" fill="#fbe7a0"/><g transform="translate(77.3 486.5) scale(0.86) translate(-77.3 -486.5)"><path d="M72 492 A5.6 5.6 0 0 1 70.5 481 A8.2 8.2 0 0 1 86.2 482.5 A5.2 5.2 0 0 1 82.5 492 Z" fill="none" stroke="#e8303a" stroke-width="4.6" stroke-linejoin="round"/><path d="M72 492 A5.6 5.6 0 0 1 70.5 481 A8.2 8.2 0 0 1 86.2 482.5 A5.2 5.2 0 0 1 82.5 492 Z" fill="none" stroke="#fff6f0" stroke-width="1.5" stroke-linejoin="round"/><line x1="73.5" y1="484.5" x2="78.5" y2="489.5" stroke="#d83828" stroke-width="1.7"/></g><polygon points="53.4,538.8 61.7,533.2 70.0,538.8 61.7,544.4" fill="#0061fe"/><polygon points="71.6,538.8 79.9,533.2 88.2,538.8 79.9,544.4" fill="#0061fe"/><polygon points="53.4,552.4 61.7,546.8 70.0,552.4 61.7,558.0" fill="#0061fe"/><polygon points="71.6,552.4 79.9,546.8 88.2,552.4 79.9,558.0" fill="#0061fe"/><polygon points="62.5,560.4 70.8,554.8 79.1,560.4 70.8,566.0" fill="#0061fe"/><circle cx="60.8" cy="559.5" r="6.8" fill="#dff5d8" stroke="#2e9a3e" stroke-width="1.5"/><polyline points="57,559.5 60,562.5 65,556" fill="none" stroke="#2e9a3e" stroke-width="2"/><g transform="translate(53.00,610.00) scale(1.0000,1.0000)"><clipPath id="odclip1"><circle cx="18.5" cy="9.3" r="9.3"/><circle cx="7.8" cy="15" r="7.6"/><circle cx="29.3" cy="16.3" r="6.6"/><rect x="7.8" y="9" width="21.5" height="13.9"/></clipPath><g clip-path="url(#odclip1)"><rect x="0" y="0" width="36" height="23" fill="#0b6fce"/><polygon points="9,0 30,0 30,13 20,11 12,13" fill="#0364b8"/><polygon points="0,23 0,21.5 19,11.2 36,16 36,23" fill="#1f9fe6"/></g></g><polygon points="55.4,704 79.8,708.6 74,711 51,706.5" fill="#e8e8e8" stroke="#bcbcbc" stroke-width="0.8"/><polygon points="70,699 78,701 76,704 68,702" fill="#cfcfcf"/><polygon points="63.2,680.3 86.3,687.2 86.3,701.6 63.2,693.8" fill="#34acf6" stroke="#255e8e" stroke-width="1.1"/><circle cx="75" cy="761.7" r="10.5" fill="#4f92c0" stroke="#2d6a90" stroke-width="0.8"/><path d="M69 754 q4 -2 8 1 q-2 4 -6 3 z M79 756 q4 1 5 6 q-3 0 -5 -3z" fill="#b8e0f8"/><polygon points="60,779 72,781 70,783 58,781" fill="#d8d8d8"/><polygon points="56.3,759.1 76.7,765.6 76.7,778.7 56.3,773" fill="#34acf6" stroke="#255e8e" stroke-width="1.1"/></svg>
<div class="r" style="left:292px;top:429px;width:603px;height:928px;box-sizing:border-box;background:#eeeeee;border:1px solid #a0a0a0;box-shadow:2px 2px 2px rgba(0,0,0,0.5);"></div>
<div class="r" style="left:295px;top:1298px;width:595px;height:51px;background:#ffffff;"></div>
<div class="r" style="left:313px;top:699px;width:560px;height:1px;background:#a0a0a0;"></div>
<div class="r" style="left:313px;top:766px;width:560px;height:1px;background:#a0a0a0;"></div>
<div class="r" style="left:313px;top:935px;width:560px;height:1px;background:#a0a0a0;"></div>
<div class="r" style="left:313px;top:1002px;width:560px;height:1px;background:#a0a0a0;"></div>
<div class="r" style="left:313px;top:1120px;width:560px;height:1px;background:#a0a0a0;"></div>
<div class="r" style="left:313px;top:1289px;width:560px;height:1px;background:#a0a0a0;"></div>
<div class="t" style="left:366.61px;top:452.20px;font-size:26px;color:#000000;font-weight:bold;transform:scaleX(1.0455);">Open</div>
<div class="t" style="left:365.57px;top:502.90px;font-size:26px;color:#000000;transform:scaleX(1.0237);">Run as administrator</div>
<div class="t" style="left:365.24px;top:553.50px;font-size:26px;color:#000000;transform:scaleX(1.0513);">Import to Grammarly</div>
<div class="t" style="left:365.53px;top:604.40px;font-size:26px;color:#000000;transform:scaleX(1.0433);">Move to OneDrive</div>
<div class="t" style="left:366.41px;top:655.70px;font-size:26px;color:#000000;transform:scaleX(0.9930);">Scan selected items for viruses</div>
<div class="t" style="left:366.41px;top:722.30px;font-size:26px;color:#000000;transform:scaleX(0.9919);">Send with Transfer...</div>
<div class="t" style="left:366.46px;top:789.40px;font-size:26px;color:#000000;transform:scaleX(0.9548);">Share</div>
<div class="t" style="left:366.32px;top:840.50px;font-size:26px;color:#000000;transform:scaleX(1.0610);">Open with</div>
<div class="t" style="left:365.62px;top:891.30px;font-size:26px;color:#000000;">Restore previous versions</div>
<div class="t" style="left:366.38px;top:958.80px;font-size:26px;color:#000000;transform:scaleX(1.0165);">Send to</div>
<div class="t" style="left:366.37px;top:1026.00px;font-size:26px;color:#000000;transform:scaleX(1.0256);">Cut</div>
<div class="t" style="left:366.36px;top:1076.90px;font-size:26px;color:#000000;transform:scaleX(1.0324);">Copy</div>
<div class="t" style="left:366.38px;top:1144.00px;font-size:26px;color:#000000;transform:scaleX(1.0132);">Create shortcut</div>
<div class="t" style="left:365.51px;top:1194.50px;font-size:26px;color:#000000;transform:scaleX(1.0521);">Delete</div>
<div class="t" style="left:365.64px;top:1245.40px;font-size:26px;color:#000000;transform:scaleX(0.9884);">Rename</div>
<div class="t" style="left:365.56px;top:1311.90px;font-size:26px;color:#000000;transform:scaleX(1.0282);">Properties</div>
<svg style="left:0;top:0" width="2897" height="1523" viewBox="0 0 2897 1523"><circle cx="331" cy="563.8" r="17.9" fill="#15c294"/><path d="M338.3 559.1 A8.8 8.8 0 1 0 336.3 569.8" fill="none" stroke="#ffffff" stroke-width="2.8"/><polyline points="334.2,567.6 341.2,567.6 341.2,574.2" fill="none" stroke="#ffffff" stroke-width="2.6"/><g transform="translate(317.00,606.00) scale(0.7778,0.7652)"><clipPath id="odclip2"><circle cx="18.5" cy="9.3" r="9.3"/><circle cx="7.8" cy="15" r="7.6"/><circle cx="29.3" cy="16.3" r="6.6"/><rect x="7.8" y="9" width="21.5" height="13.9"/></clipPath><g clip-path="url(#odclip2)"><rect x="0" y="0" width="36" height="23" fill="#0b6fce"/><polygon points="9,0 30,0 30,13 20,11 12,13" fill="#0364b8"/><polygon points="0,23 0,21.5 19,11.2 36,16 36,23" fill="#1f9fe6"/></g></g><g fill="#f07a10"><circle cx="330.5" cy="666.3" r="4.4"/><ellipse cx="334.6" cy="661.6" rx="3.6" ry="2.6" transform="rotate(-35 334.6 661.6)"/><ellipse cx="334.4" cy="671" rx="3.8" ry="2.5" transform="rotate(38 334.4 671)"/><ellipse cx="325.4" cy="669.3" rx="3.6" ry="2.4" transform="rotate(-30 325.4 669.3)"/><ellipse cx="327.2" cy="661.8" rx="2.4" ry="1.8" transform="rotate(65 327.2 661.8)"/></g><circle cx="330.6" cy="666.1" r="2.4" fill="#ffe6a0"/><circle cx="330.5" cy="666.2" r="1.1" fill="#b85010"/><polygon points="315.2,724.5 322.7,719.4 330.1,724.5 322.7,729.5" fill="#0061fe"/><polygon points="331.6,724.5 339.1,719.4 346.5,724.5 339.1,729.5" fill="#0061fe"/><polygon points="315.2,736.7 322.7,731.7 330.1,736.7 322.7,741.7" fill="#0061fe"/><polygon points="331.6,736.7 339.1,731.7 346.5,736.7 339.1,741.7" fill="#0061fe"/><polygon points="323.4,743.9 330.9,738.9 338.3,743.9 330.9,748.9" fill="#0061fe"/><path d="M313.9 793.3 V815 H340.5 V810.2" fill="none" stroke="#000" stroke-width="2.2"/><path d="M320.8 807.5 C322 797 330 792.5 338 792.5 V786 L347.5 796.4 L338 806.5 V800.5 C331 800 325 802.5 320.8 807.5 Z" fill="none" stroke="#000" stroke-width="2" stroke-linejoin="miter"/><polyline points="856.5,837.5 871.5,850.5 856.5,864" fill="none" stroke="#000" stroke-width="1.5"/><polyline points="856.5,955 871.5,968 856.5,981.5" fill="none" stroke="#000" stroke-width="1.5"/></svg>
</body></html>
